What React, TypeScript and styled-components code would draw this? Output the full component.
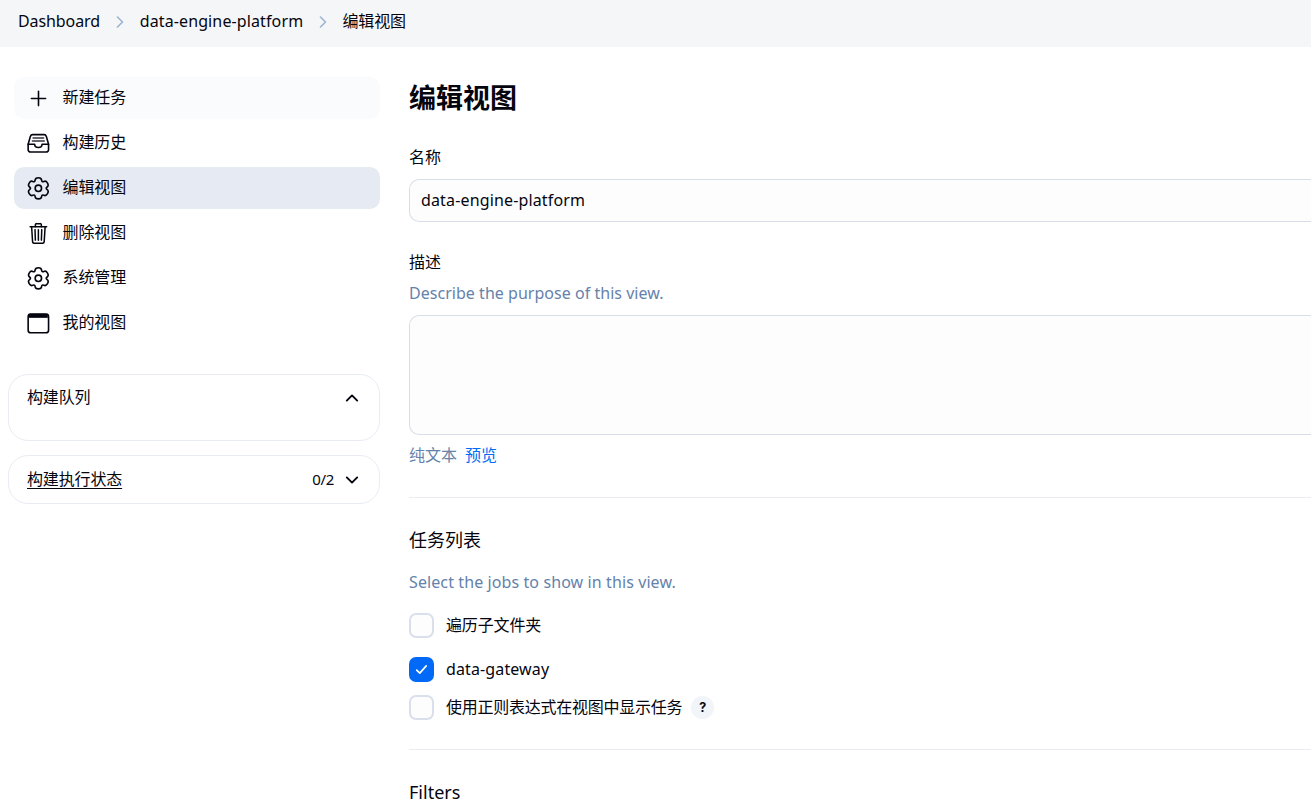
import React, { ReactNode } from 'react';
import styled, { createGlobalStyle } from 'styled-components';
import { IoTrashOutline } from 'react-icons/io5';

const GlobalStyle = createGlobalStyle`
  * { box-sizing: border-box; }
  html, body { height: 100%; }
  body {
    margin: 0;
    overflow: hidden;
    background: #fff;
    color: #05050f;
    font: 400 16px/24px "Noto Sans", "Noto Sans CJK SC", sans-serif;
  }
  h1, h2, p { margin: 0; }
`;

const Page = styled.div`
  height: 804px;
  overflow: hidden;
`;

const Breadcrumbs = styled.nav`
  display: flex;
  align-items: center;
  height: 47px;
  padding: 0 18px 5px;
  background: #f5f6f8;
`;

const CrumbLink = styled.a<{ $width?: number; $tracking?: number }>`
  width: ${p => (p.$width ? `${p.$width}px` : 'auto')};
  letter-spacing: ${p => p.$tracking ?? 0}px;
  white-space: nowrap;
`;

const Separator = styled.svg`
  width: 8px;
  height: 12px;
  margin: 2px 15.7px 0 16px;
  fill: none;
  stroke: #9bb3d0;
  stroke-width: 1.6;
  stroke-linecap: round;
  stroke-linejoin: round;
`;

const Columns = styled.div`
  display: grid;
  grid-template-columns: 380px 1fr;
  column-gap: 29px;
`;

const SidePanel = styled.aside`
  padding: 30px 0 0 8px;
`;

const Tasks = styled.div`
  display: flex;
  flex-direction: column;
  gap: 3px;
  padding-left: 6px;
`;

const Task = styled.a<{ $bg?: string }>`
  display: flex;
  align-items: center;
  gap: 12.5px;
  height: 42px;
  padding-left: 12px;
  border-radius: 10px;
  background: ${p => p.$bg ?? 'transparent'};
`;

const TaskIcon = styled.span`
  display: flex;
  width: 24px;
  height: 24px;
  svg { width: 24px; height: 24px; }
`;

const TaskLabel = styled.span`
  height: 24px;
  margin-bottom: 2px;
  letter-spacing: -0.1px;
`;

const Pane = styled.section<{ $height: number; $top: number; $pad: number }>`
  display: flex;
  align-items: flex-start;
  height: ${p => p.$height}px;
  margin-top: ${p => p.$top}px;
  padding: ${p => p.$pad}px 19px 0 18px;
  border: 1px solid #e9ecf4;
  border-radius: 20px;
`;

const PaneTitle = styled.span`
  flex: 1;
  letter-spacing: -0.15px;
`;

const PaneLink = styled.a`
  letter-spacing: -0.15px;
  text-decoration: underline;
  text-underline-offset: 3px;
  margin-right: auto;
`;

const Chevron = styled.svg`
  width: 16px;
  height: 16px;
  margin: 5px 0 0 10px;
  fill: none;
  stroke: #05050f;
  stroke-width: 1.9;
  stroke-linecap: round;
  stroke-linejoin: round;
`;

const Count = styled.span`
  font-size: 15px;
  letter-spacing: -0.3px;
`;

const Main = styled.main`
  display: flex;
  flex-direction: column;
  padding-top: 31px;
`;

const Title = styled.h1`
  height: 40px;
  font-size: 27px;
  line-height: 40px;
  font-weight: 700;
`;

const Label = styled.div<{ $top: number }>`
  height: 24px;
  margin-top: ${p => p.$top}px;
`;

const Hint = styled.p<{ $top: number; $tracking: number }>`
  height: 24px;
  margin-top: ${p => p.$top}px;
  color: #6582ab;
  letter-spacing: ${p => p.$tracking}px;
`;

const fieldBox = `
  border: 1px solid #d6dee9;
  border-right: 0;
  border-radius: 10px 0 0 10px;
  background: #fdfdfd;
`;

const TextField = styled.div`
  ${fieldBox}
  height: 43px;
  margin-top: 10px;
  padding: 8px 11px;
  letter-spacing: 0.15px;
`;

const TextArea = styled.div`
  ${fieldBox}
  height: 120px;
  margin-top: 10px;
`;

const Modes = styled.div`
  display: flex;
  gap: 8px;
  height: 24px;
  margin-top: 8px;
`;

const PlainMode = styled.span`
  color: #6582ab;
`;

const PreviewLink = styled.a`
  color: #006cf5;
`;

const Divider = styled.div<{ $top: number }>`
  height: 1px;
  margin-top: ${p => p.$top}px;
  background: #e9ecf2;
`;

const SectionTitle = styled.h2<{ $top: number }>`
  height: 26px;
  margin-top: ${p => p.$top}px;
  font-size: 18px;
  line-height: 26px;
  font-weight: 400;
`;

const CheckRow = styled.label<{ $top: number }>`
  display: flex;
  align-items: center;
  height: 25px;
  margin-top: ${p => p.$top}px;
`;

const CheckLabel = styled.span<{ $tracking: number }>`
  margin-bottom: 2px;
  letter-spacing: ${p => p.$tracking}px;
`;

const Box = styled.span<{ $on?: boolean }>`
  display: flex;
  align-items: center;
  justify-content: center;
  width: 25px;
  height: 25px;
  margin-right: 12px;
  border: ${p => (p.$on ? '0' : '2px solid #dadfec')};
  border-radius: 7px;
  background: ${p => (p.$on ? '#0069f7' : '#fdfdfd')};
`;

const Help = styled.span`
  width: 23px;
  height: 23px;
  margin-left: 9px;
  border-radius: 50%;
  background: #f1f4f8;
  font: 700 12.5px/24px Inter, sans-serif;
  text-align: center;
`;

const Crumb = () => (
  <Separator viewBox="0 0 8 12"><path d="M1.5 1 6.5 6l-5 5" /></Separator>
);

const iconView = '-0.35 -0.35 24 24';

const Plus = () => (
  <svg viewBox="-0.5 -0.5 24 24" fill="none" stroke="#05050f" strokeWidth="1.6" strokeLinecap="round">
    <path d="M12 4.9v14.2M4.9 12h14.2" />
  </svg>
);

const TrayIcon = () => (
  <svg viewBox={iconView} fill="none" stroke="#05050f" strokeWidth="1.6" strokeLinecap="round" strokeLinejoin="round">
    <path d="M1.8 12.9 4 5.2C4.4 3.9 5 3.3 6.3 3.3H17.7C19 3.3 19.6 3.9 20 5.2L22.2 12.9V18.3A2.4 2.4 0 0 1 19.8 20.7H4.200A2.4 2.4 0 0 1 1.8 18.3Z" />
    <path d="M1.8 12.9H8.3C8.3 14.9 9.8 16.2 12 16.2S15.7 14.9 15.7 12.9H22.2" />
    <path d="M6.7 6.7H17.3M6 9.7H18" strokeWidth="1.4" stroke="#33333b" />
  </svg>
);

/* Six-lobed cog outline: two control points per lobe, one per notch. */
const gearPath = (() => {
  const at = (deg: number, r: number) => {
    const a = (deg * Math.PI) / 180;
    return [12 + r * Math.cos(a), 12 + r * Math.sin(a)];
  };
  const pts = [-90, -30, 30, 90, 150, 210].flatMap(d => [
    at(d - 16, 11),
    at(d + 16, 11),
    at(d + 30, 6.9),
  ]);
  const mid = (i: number) => {
    const a = pts[i % pts.length];
    const b = pts[(i + 1) % pts.length];
    return `${((a[0] + b[0]) / 2).toFixed(2)} ${((a[1] + b[1]) / 2).toFixed(2)}`;
  };
  const curves = pts.map((_, i) => {
    const c = pts[(i + 1) % pts.length];
    return `Q${c[0].toFixed(2)} ${c[1].toFixed(2)} ${mid(i + 1)}`;
  });
  return `M${mid(0)}${curves.join('')}Z`;
})();

const GearIcon = () => (
  <svg viewBox={iconView} fill="none" stroke="#05050f" strokeWidth="1.6" strokeLinejoin="round">
    <path d={gearPath} />
    <circle cx="12" cy="12" r="3.2" />
  </svg>
);

const WindowIcon = () => (
  <svg viewBox={iconView} fill="none" stroke="#05050f" strokeWidth="1.6">
    <rect x="1.8" y="2.6" width="20.4" height="18.8" rx="2.6" />
    <path d="M2.5 4.5h19" strokeWidth="4" />
  </svg>
);

const tasks: { label: string; icon: ReactNode; bg?: string }[] = [
  { label: '新建任务', icon: <Plus />, bg: '#fafbfd' },
  { label: '构建历史', icon: <TrayIcon /> },
  { label: '编辑视图', icon: <GearIcon />, bg: '#e6eaf2' },
  { label: '删除视图', icon: <IoTrashOutline viewBox="-8 -8 512 512" /> },
  { label: '系统管理', icon: <GearIcon /> },
  { label: '我的视图', icon: <WindowIcon /> },
];

export default function App() {
  return (
    <Page>
      <GlobalStyle />
      <Breadcrumbs>
        <CrumbLink $width={82} $tracking={-0.1}>Dashboard</CrumbLink>
        <Crumb />
        <CrumbLink $width={163} $tracking={0.12}>data-engine-platform</CrumbLink>
        <Crumb />
        <CrumbLink $tracking={-0.1}>编辑视图</CrumbLink>
      </Breadcrumbs>
      <Columns>
        <SidePanel>
          <Tasks>
            {tasks.map(t => (
              <Task key={t.label} $bg={t.bg}>
                <TaskIcon>{t.icon}</TaskIcon>
                <TaskLabel>{t.label}</TaskLabel>
              </Task>
            ))}
          </Tasks>
          <Pane $height={67} $top={30} $pad={10}>
            <PaneTitle>构建队列</PaneTitle>
            <Chevron viewBox="0 0 16 16"><path d="M2.8 10.6 8 5.4l5.2 5.2" /></Chevron>
          </Pane>
          <Pane $height={49} $top={14} $pad={11}>
            <PaneLink>构建执行状态</PaneLink>
            <Count>0/2</Count>
            <Chevron viewBox="0 0 16 16"><path d="M2.8 5.4 8 10.6l5.2-5.2" /></Chevron>
          </Pane>
        </SidePanel>
        <Main>
          <Title>编辑视图</Title>
          <Label $top={27}>名称</Label>
          <TextField>data-engine-platform</TextField>
          <Label $top={28}>描述</Label>
          <Hint $top={7} $tracking={0.03}>Describe the purpose of this view.</Hint>
          <TextArea />
          <Modes>
            <PlainMode>纯文本</PlainMode>
            <PreviewLink>预览</PreviewLink>
          </Modes>
          <Divider $top={30} />
          <SectionTitle $top={29}>任务列表</SectionTitle>
          <Hint $top={17} $tracking={0.1}>Select the jobs to show in this view.</Hint>
          <CheckRow $top={19}>
            <Box />
            <CheckLabel $tracking={-0.15}>遍历子文件夹</CheckLabel>
          </CheckRow>
          <CheckRow $top={19}>
            <Box $on>
              <svg width="13" height="13" viewBox="0 0 13 13" fill="none" stroke="#fff" strokeWidth="1.7" strokeLinecap="round" strokeLinejoin="round">
                <path d="M1.7 7.1 4.8 10.1 11.2 2.9" />
              </svg>
            </Box>
            <CheckLabel $tracking={0.12}>data-gateway</CheckLabel>
          </CheckRow>
          <CheckRow $top={13}>
            <Box />
            <CheckLabel $tracking={-0.25}>使用正则表达式在视图中显示任务</CheckLabel>
            <Help>?</Help>
          </CheckRow>
          <Divider $top={29} />
          <SectionTitle $top={29}>Filters</SectionTitle>
        </Main>
      </Columns>
    </Page>
  );
}
